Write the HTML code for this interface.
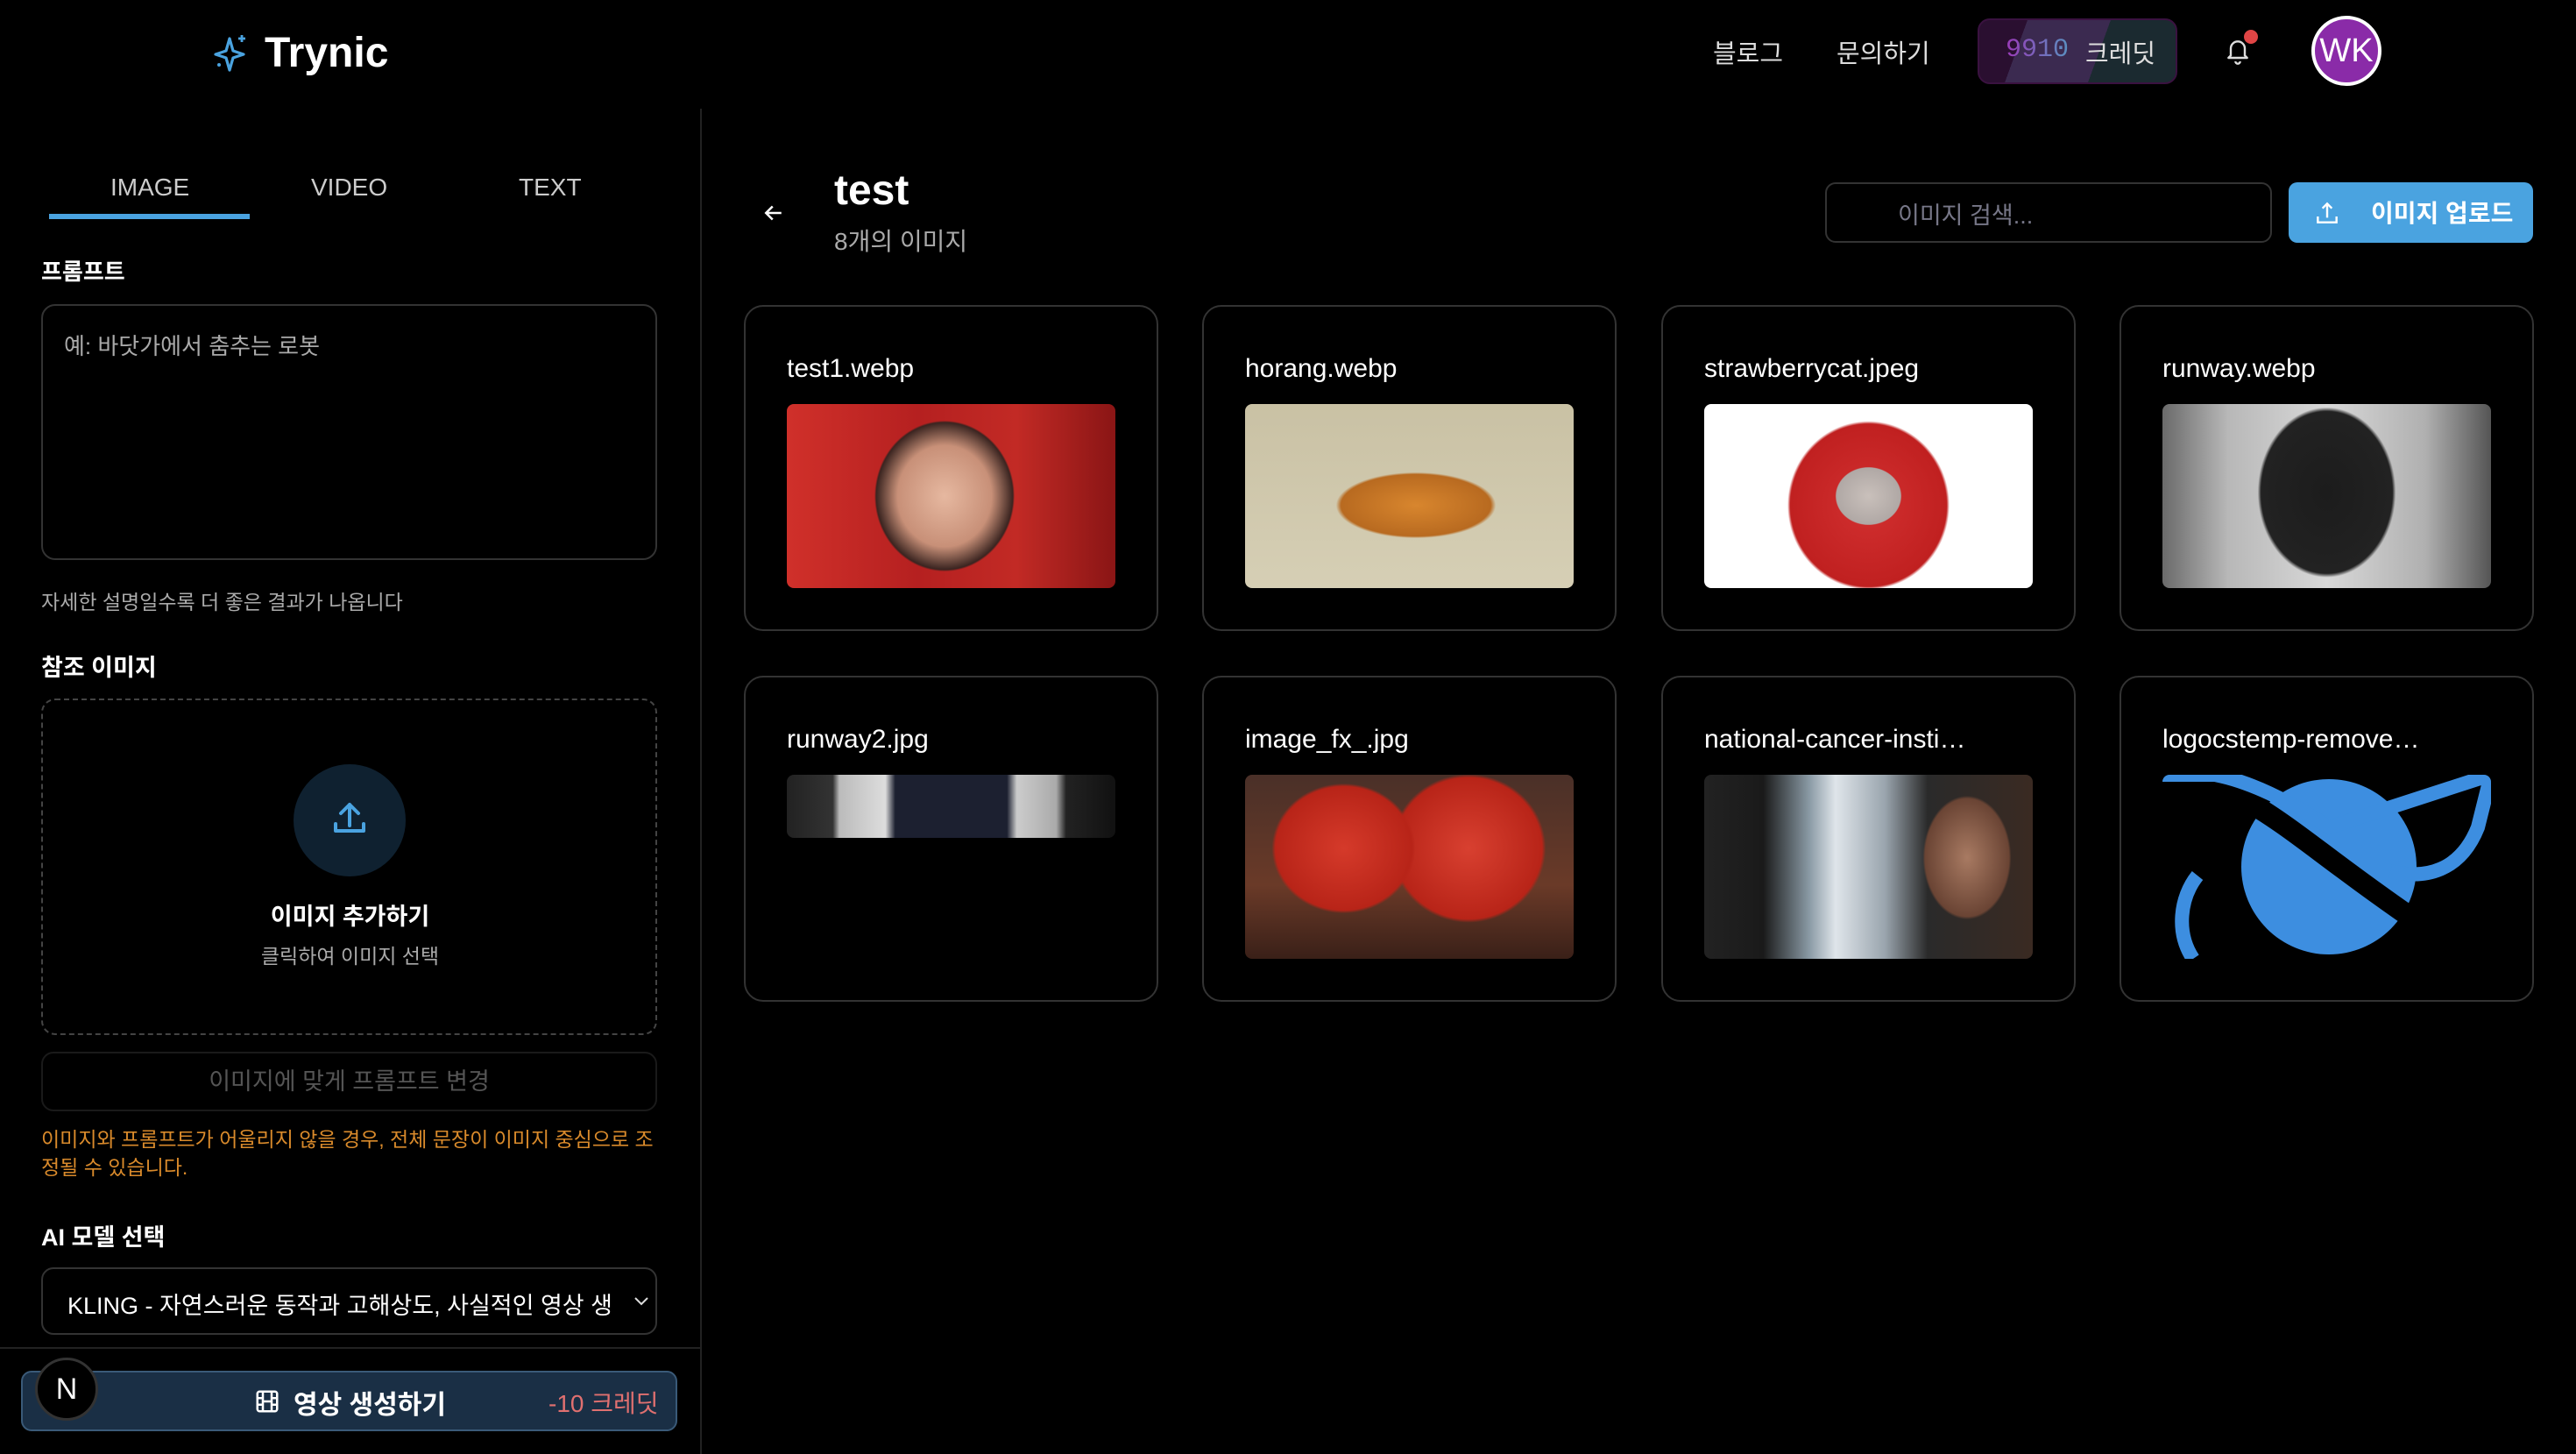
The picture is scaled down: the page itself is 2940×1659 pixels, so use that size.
<!DOCTYPE html>
<html><head><meta charset="utf-8"><style>
*{box-sizing:border-box;margin:0;padding:0}
body{width:2940px;height:1659px;background:#000;color:#fff;font-family:"Liberation Sans","Noto Sans CJK KR",sans-serif;position:relative;overflow:hidden}
.a{position:absolute}
.card{position:absolute;width:473px;height:372px;border:2px solid #333;border-radius:22px}
.card .t{position:absolute;left:47px;top:54px;font-size:30px;color:#fff;white-space:nowrap}
.card .im{position:absolute;left:47px;top:111px;width:375px;height:210px;border-radius:8px;overflow:hidden}
</style></head><body>
<!-- header -->
<svg class="a" style="left:244px;top:38px" width="40" height="44" viewBox="0 0 20 22"><path d="M9 3 L11 10 L17 12 L11 14 L9 21 L7 14 L1 12 L7 10 Z" fill="none" stroke="#4aa3e0" stroke-width="1.6" stroke-linejoin="round"/><path d="M16 1v4M14 3h4" stroke="#4aa3e0" stroke-width="1.4"/><circle cx="3" cy="18" r="1" fill="#4aa3e0"/></svg>
<div class="a" style="left:302px;top:33px;font-size:48px;font-weight:bold">Trynic</div>
<div class="a" style="left:1955px;top:38px;font-size:29px;color:#ddd">블로그</div>
<div class="a" style="left:2096px;top:38px;font-size:29px;color:#ddd">문의하기</div>
<div class="a" style="left:2257px;top:21px;width:228px;height:75px;border-radius:14px;border:2px solid #3a1240;background:linear-gradient(110deg,#2a0f30 0%,#2a0f30 22%,#3b2a50 22%,#3b2a50 60%,#1b2a30 60%);"></div>
<div class="a" style="left:2289px;top:40px;font-size:30px;font-family:'Liberation Mono',monospace;background:linear-gradient(90deg,#9a3ab8,#5a90c0);-webkit-background-clip:text;color:transparent">9910</div>
<div class="a" style="left:2380px;top:38px;font-size:29px;color:#ddd">크레딧</div>
<svg class="a" style="left:2538px;top:40px" width="32" height="36" viewBox="0 0 24 26"><path d="M6 17V11a6 6 0 0 1 12 0v6l2 2H4z M10 22a2 2 0 0 0 4 0" fill="none" stroke="#ddd" stroke-width="1.8" stroke-linejoin="round"/></svg>
<div class="a" style="left:2561px;top:34px;width:16px;height:16px;border-radius:50%;background:#e04545"></div>
<div class="a" style="left:2638px;top:18px;width:80px;height:80px;border-radius:50%;background:#8a2ba8;border:4px solid #fff;font-size:38px;text-align:center;line-height:72px">WK</div>
<!-- left panel -->
<div class="a" style="left:799px;top:124px;width:2px;height:1535px;background:#222"></div>
<div class="a" style="left:0;top:1537px;width:799px;height:2px;background:#222"></div>
<div class="a" style="left:126px;top:198px;font-size:28px;color:#ccc">IMAGE</div>
<div class="a" style="left:355px;top:198px;font-size:28px;color:#ccc">VIDEO</div>
<div class="a" style="left:592px;top:198px;font-size:28px;color:#ccc">TEXT</div>
<div class="a" style="left:56px;top:244px;width:229px;height:6px;background:#4aa3e0"></div>
<div class="a" style="left:47px;top:290px;font-size:26px;font-weight:bold">프롬프트</div>
<div class="a" style="left:47px;top:347px;width:703px;height:292px;border:2px solid #333;border-radius:16px"></div>
<div class="a" style="left:73px;top:375px;font-size:26px;color:#aaa">예: 바닷가에서 춤추는 로봇</div>
<div class="a" style="left:47px;top:668px;font-size:23px;color:#aaa">자세한 설명일수록 더 좋은 결과가 나옵니다</div>
<div class="a" style="left:47px;top:740px;font-size:27px;font-weight:bold">참조 이미지</div>
<div class="a" style="left:47px;top:797px;width:703px;height:384px;border:2px dashed #444;border-radius:16px"></div>
<div class="a" style="left:335px;top:872px;width:128px;height:128px;border-radius:50%;background:#0f2130"></div>
<svg class="a" style="left:375px;top:910px" width="48" height="48" viewBox="0 0 24 24"><path d="M4 15v4h16v-4M12 16V4M7 9l5-5 5 5" fill="none" stroke="#4aa3e0" stroke-width="2" stroke-linecap="round" stroke-linejoin="round"/></svg>
<div class="a" style="left:0;top:1024px;width:799px;text-align:center;font-size:27px;font-weight:bold">이미지 추가하기</div>
<div class="a" style="left:0;top:1072px;width:799px;text-align:center;font-size:23px;color:#aaa">클릭하여 이미지 선택</div>
<div class="a" style="left:47px;top:1200px;width:703px;height:68px;border:2px solid #1a1a1a;border-radius:14px;text-align:center;line-height:64px;font-size:27px;color:#555">이미지에 맞게 프롬프트 변경</div>
<div class="a" style="left:47px;top:1284px;width:705px;font-size:23px;line-height:32px;color:#d98a2b">이미지와 프롬프트가 어울리지 않을 경우, 전체 문장이 이미지 중심으로 조정될 수 있습니다.</div>
<div class="a" style="left:47px;top:1390px;font-size:27px;font-weight:bold">AI 모델 선택</div>
<div class="a" style="left:47px;top:1446px;width:703px;height:77px;border:2px solid #333;border-radius:14px"></div>
<div class="a" style="left:77px;top:1468px;font-size:27px;width:620px;overflow:hidden;white-space:nowrap">KLING - 자연스러운 동작과 고해상도, 사실적인 영상 생성</div>
<svg class="a" style="left:720px;top:1474px" width="24" height="20" viewBox="0 0 24 20"><path d="M5 7l7 7 7-7" fill="none" stroke="#ddd" stroke-width="2"/></svg>
<div class="a" style="left:24px;top:1564px;width:749px;height:69px;border:2px solid #3a5a78;border-radius:12px;background:#1a2f45"></div>
<svg class="a" style="left:290px;top:1584px" width="30" height="30" viewBox="0 0 24 24"><rect x="3" y="3" width="18" height="18" rx="2" fill="none" stroke="#fff" stroke-width="2"/><path d="M8 3v18M16 3v18M3 9h5M3 15h5M16 9h5M16 15h5M8 12h8" stroke="#fff" stroke-width="2"/></svg>
<div class="a" style="left:335px;top:1578px;font-size:30px;font-weight:bold">영상 생성하기</div>
<div class="a" style="left:626px;top:1580px;font-size:28px;color:#e07070">-10 크레딧</div>
<div class="a" style="left:40px;top:1549px;width:72px;height:72px;border-radius:50%;background:#000;border:3px solid #333;text-align:center;line-height:66px;font-size:34px">N</div>
<!-- right -->
<svg class="a" style="left:868px;top:228px" width="30" height="30" viewBox="0 0 24 24"><path d="M19 12H5M11 6l-6 6 6 6" fill="none" stroke="#fff" stroke-width="2"/></svg>
<div class="a" style="left:952px;top:190px;font-size:48px;font-weight:bold">test</div>
<div class="a" style="left:952px;top:254px;font-size:28px;color:#aaa">8개의 이미지</div>
<div class="a" style="left:2083px;top:208px;width:510px;height:69px;border:2px solid #333;border-radius:12px"></div>
<div class="a" style="left:2166px;top:224px;font-size:27px;color:#778">이미지 검색...</div>
<div class="a" style="left:2612px;top:208px;width:279px;height:69px;border-radius:10px;background:#4aa3e0"></div>
<svg class="a" style="left:2640px;top:226px" width="32" height="34" viewBox="0 0 24 24"><path d="M4 15v5h16v-5M12 16V4M8 8l4-4 4 4" fill="none" stroke="#fff" stroke-width="1.8"/></svg>
<div class="a" style="left:2706px;top:222px;font-size:28px;font-weight:bold">이미지 업로드</div>

<div class="card" style="left:849px;top:348px"><div class="t">test1.webp</div><div class="im" style="background:radial-gradient(ellipse 26% 50% at 48% 50%,#e6b8a0 0%,#c89078 55%,#3a2420 80%,transparent 82%),linear-gradient(90deg,#d0302a,#b52020 40%,#c22a25 70%,#8a1515)"></div></div>
<div class="card" style="left:1372px;top:348px"><div class="t">horang.webp</div><div class="im" style="background:radial-gradient(ellipse 38% 28% at 52% 55%,#d8862e 0%,#b86a20 60%,transparent 64%),linear-gradient(#c9c1a4,#d6cfb5)"></div></div>
<div class="card" style="left:1896px;top:348px"><div class="t">strawberrycat.jpeg</div><div class="im" style="background:radial-gradient(ellipse 14% 22% at 50% 50%,#c9c0bb 0%,#b0a8a5 70%,transparent 72%),radial-gradient(ellipse 28% 52% at 50% 55%,#d23030 0%,#c02020 85%,transparent 88%),#fff"></div></div>
<div class="card" style="left:2419px;top:348px"><div class="t">runway.webp</div><div class="im" style="background:radial-gradient(ellipse 25% 55% at 50% 48%,#1c1c1c 0%,#222 80%,transparent 84%),linear-gradient(90deg,#6a6a6a,#b8b8b8 20%,#d8d8d8 50%,#b0b0b0 80%,#555)"></div></div>
<div class="card" style="left:849px;top:771px"><div class="t">runway2.jpg</div><div class="im" style="height:72px;background:linear-gradient(90deg,#222 0%,#333 14%,#bbb 16%,#ddd 30%,#1c2030 33%,#1c2030 67%,#ccc 70%,#aaa 82%,#222 85%,#111)"></div></div>
<div class="card" style="left:1372px;top:771px"><div class="t">image_fx_.jpg</div><div class="im" style="background:radial-gradient(ellipse 26% 42% at 30% 40%,#d53a2a,#b82418 80%,transparent 84%),radial-gradient(ellipse 28% 48% at 68% 40%,#d84030,#b82418 80%,transparent 84%),linear-gradient(#4a3028,#6a3a28 60%,#3a2018)"></div></div>
<div class="card" style="left:1896px;top:771px"><div class="t">national-cancer-insti…</div><div class="im" style="background:radial-gradient(ellipse 16% 40% at 80% 45%,#a87a62,#6a4434 80%,transparent 84%),linear-gradient(90deg,#222 0%,#1a1a1a 18%,#8a9aa5 32%,#dfe5ea 40%,#9aa5ae 55%,#2a2a2a 68%,#3a2a22)"></div></div>
<div class="card" style="left:2419px;top:771px"><div class="t">logocstemp-remove…</div><div class="im" style="background:#000"><svg width="375" height="210" viewBox="0 0 375 210"><circle cx="190" cy="105" r="100" fill="#3d8ee0"/><path d="M10 10 C60 -5 130 50 190 95 C250 140 300 175 340 200" stroke="#000" stroke-width="24" fill="none"/><path d="M0 0 L60 0 C110 10 160 40 190 60 L375 0 L360 60 C340 110 300 120 260 110" stroke="#3d8ee0" stroke-width="16" fill="none"/><path d="M35 210 C15 180 20 140 40 115" stroke="#3d8ee0" stroke-width="16" fill="none"/></svg></div></div>
</body></html>
